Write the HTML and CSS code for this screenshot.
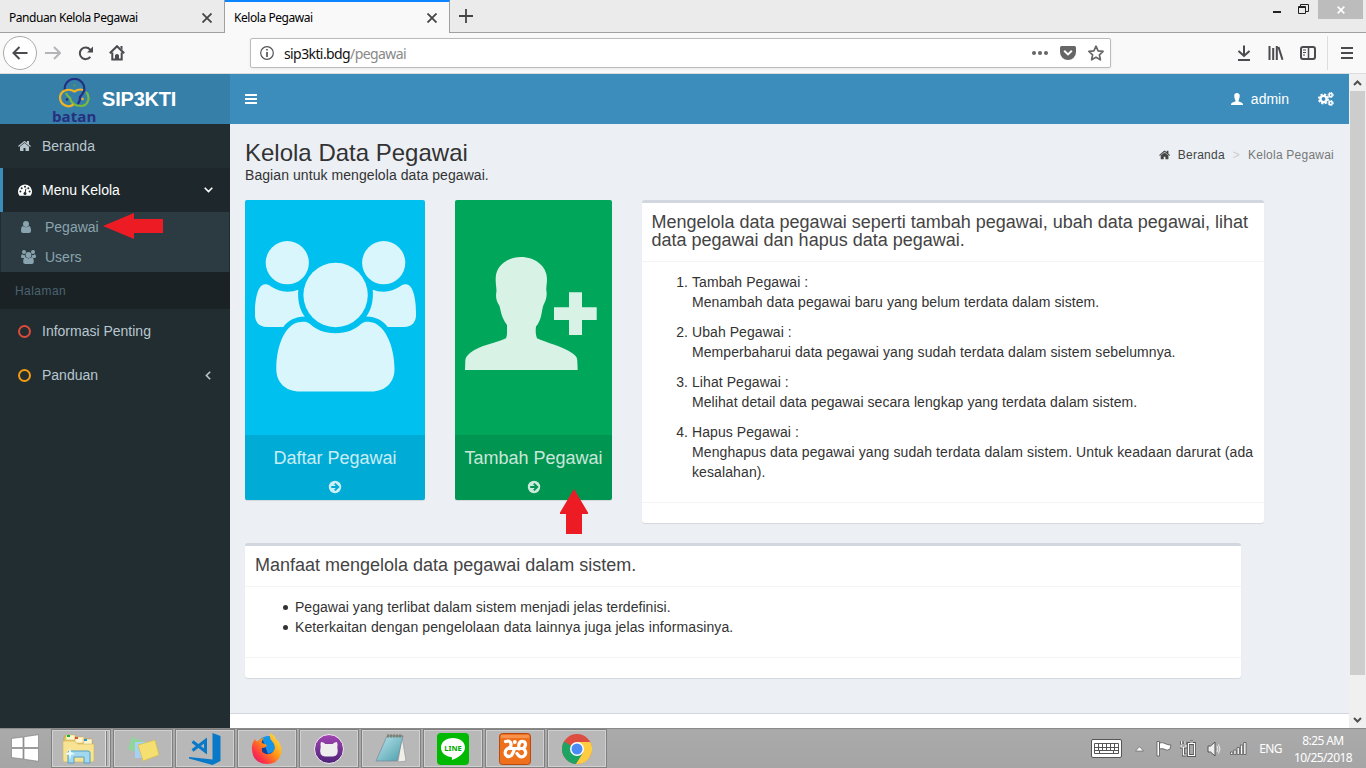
FILE: index.html
```html
<!DOCTYPE html>
<html lang="id">
<head>
<meta charset="utf-8">
<title>Kelola Pegawai</title>
<link rel="stylesheet" href="styles.css">
</head>
<body>
<svg class="defs" width="0" height="0">
  <symbol id="home" viewBox="0 0 1792 1792"><path d="M1408 992v480q0 26-19 45t-45 19h-384v-384h-256v384h-384q-26 0-45-19t-19-45v-480q0-1 .5-3t.5-3l575-474 575 474q1 2 1 6zm223-69l-62 74q-8 9-21 11h-3q-13 0-21-7l-692-577-692 577q-12 8-24 7-13-2-21-11l-62-74q-8-10-7-23.5t11-21.5l719-599q32-26 76-26t76 26l244 204v-195q0-14 9-23t23-9h192q14 0 23 9t9 23v408l219 182q10 8 11 21.5t-7 23.5z"/></symbol>
</svg>

<header class="tabs">
  <div class="tab"><span class="tab-title">Panduan Kelola Pegawai</span><svg width="10" height="10" viewBox="0 0 10 10"><path d="M.5.5l9 9M9.500.5l-9 9"/></svg></div>
  <div class="tab current"><span class="tab-title">Kelola Pegawai</span><svg width="10" height="10" viewBox="0 0 10 10"><path d="M.5.5l9 9M9.500.5l-9 9"/></svg></div>
  <div class="tab-space"><svg width="14" height="14" viewBox="0 0 14 14"><path d="M7 0v14M0 7h14"/></svg></div>
  <div class="win">
    <svg width="8" height="19" viewBox="0 0 8 19"><path d="M0 12h8" stroke="#222" stroke-width="2"/></svg>
    <svg width="11" height="19" viewBox="0 0 11 19"><path d="M.5 6.500h7v7h-7zM.5 7.500h7M2.500 6V4.500h8v7H8" fill="none" stroke="#222"/></svg>
    <span class="win-close"><svg width="8" height="8" viewBox="0 0 8 8"><path d="M.7.7l6.600 6.600M7.300.7L.7 7.300" stroke="#fff" stroke-width="1.700"/></svg></span>
  </div>
</header>

<nav class="toolbar">
  <span class="back"><svg width="16" height="14" viewBox="0 0 16 14"><path d="M15.500 7H1.500M7.500 1l-6 6 6 6"/></svg></span>
  <svg class="fwd" width="16" height="14" viewBox="0 0 16 14"><path d="M0 7h15M9 1l6 6-6 6"/></svg>
  <svg class="reload" width="16" height="16" viewBox="0 0 16 16"><path d="M12.300 11.800A5.800 5.800 0 1 1 12 4.500L13.500 6"/><path d="M15 1.500V7.500H9z" fill="#4a4a4f" stroke="none"/></svg>
  <svg class="house" width="16" height="16" viewBox="0 0 16 16"><path d="M.8 8.300 8 1.200l7.200 7.100M3.300 7.500V14.500h9.400V7.500"/><path d="M6 15v-4.500q0-1.500 2-1.500t2 1.500V15zM11.500 1h2v4l-2-2z" fill="#4a4a4f" stroke="none"/></svg>
  <div class="url">
    <svg width="14" height="14" viewBox="0 0 14 14"><circle cx="7" cy="7" r="6.300" fill="none" stroke="#555" stroke-width="1.200"/><path d="M7 6v5M7 3v1.600" stroke="#555" stroke-width="1.700"/></svg>
    <span class="address">sip3kti.bdg<i>/pegawai</i></span>
    <svg width="16" height="4" viewBox="0 0 16 4"><g fill="#666"><circle cx="2" cy="2" r="2"/><circle cx="8" cy="2" r="2"/><circle cx="14" cy="2" r="2"/></g></svg>
    <svg class="pocket" width="16" height="14" viewBox="0 0 16 14"><path fill="#666" d="M1.500 0h13Q16 0 16 1.500V6a8 8 0 0 1-16 0V1.500Q0 0 1.500 0z"/><path d="M4.200 4.700 8 8.400l3.800-3.700" fill="none" stroke="#fff" stroke-width="2"/></svg>
    <svg class="star" width="16" height="16" viewBox="0 0 16 16"><path d="M8 1.200l2.100 4.600 5 .6-3.700 3.400 1 5L8 12.300l-4.400 2.500 1-5L.9 6.400l5-.6z" fill="none" stroke="#666" stroke-width="1.700" stroke-linejoin="round"/></svg>
  </div>
  <div class="tools">
    <svg width="14" height="16" viewBox="0 0 14 16"><path d="M7 .5v10M1.500 6 7 11l5.500-5M1 15h12"/></svg>
    <svg width="16" height="14" viewBox="0 0 16 14"><path d="M1.500 0v14M5.200 2v12M8.800 0v14M10.500 1l4 12.700"/></svg>
    <svg width="16" height="14" viewBox="0 0 16 14"><rect x="1" y="1" width="14" height="12" rx="2"/><path d="M8.500 1v12" stroke-width="1.500"/><path d="M3 4h3M3 6.500h3M3 9h2" stroke-width="1"/></svg>
    <i class="sep"></i>
    <svg width="12" height="12" viewBox="0 0 12 12"><path d="M0 1h12M0 6h12M0 11h12"/></svg>
  </div>
</nav>

<div class="page">
  <aside class="sidebar">
    <div class="logo">
      <div class="batan">
        <svg width="32" height="30" viewBox="59 78 32 30"><g fill="none" stroke-width="2.200"><path d="M65 91A9.800 9.800 0 1 1 84 91Q82 95 80 97 80 102 77.500 104" stroke="#23307f"/><path d="M86 92C91 97 88 106 81 106 75 106 71 103 70 98Q67 96 66 93" stroke="#7ab83c"/><path d="M73.500 104.500C67 109 60 104 60 97 61 90 69 88 74.500 91.500Q79 88.500 83 90" stroke="#f0b323"/></g><circle cx="74.500" cy="85.500" r="1.300" fill="#4e9c50"/><circle cx="67" cy="99.500" r="1.300" fill="#23307f"/><circle cx="82.500" cy="99" r="1.300" fill="#f0b323"/></svg>
        <b>batan</b>
      </div>
      <strong>SIP3KTI</strong>
    </div>
    <a class="item"><svg class="ico" width="14" height="14"><use href="#home"/></svg>Beranda</a>
    <a class="item active"><svg class="ico" width="14" height="12" viewBox="0 0 14 12"><path fill="#fff" d="M1.300 11.500A7 7 0 1 1 12.700 11.500q-.2.300-.6.300H1.900q-.4 0-.6-.3z"/><g fill="#1e282c"><circle cx="2.400" cy="7.400" r="1"/><circle cx="3.700" cy="4.200" r="1"/><circle cx="7" cy="2.700" r="1"/><circle cx="10.300" cy="4.200" r="1"/><circle cx="11.600" cy="7.400" r="1"/><circle cx="7" cy="9.500" r="1.500"/></g><path d="M7 9l1-4.300" stroke="#1e282c"/></svg>Menu Kelola<svg class="chev" width="9" height="6" viewBox="0 0 9 6"><path d="M.7.8 4.500 4.600 8.300.8"/></svg></a>
    <div class="sub">
      <a><svg width="10" height="12" viewBox="0 0 10 12"><circle cx="5" cy="3" r="3"/><path d="M1.800 5Q5 7.700 8.200 5 10 5.500 10 10q0 2-2 2H2q-2 0-2-2 0-4.500 1.800-5z"/></svg><span>Pegawai</span></a>
      <a><svg class="wide" width="15" height="14" viewBox="0 0 15 14"><circle cx="3" cy="2" r="2"/><circle cx="12" cy="2" r="2"/><circle cx="7.500" cy="5" r="2.900"/><path d="M1.200 4.200Q3 5.500 4 5q-.1 1.500.7 2.500Q3.500 7.500 3 8H1.500Q0 8 0 6.800q0-2.300 1.200-2.600zM13.800 4.200Q12 5.500 11 5q.1 1.500-.7 2.500 1.200 0 1.700.5h1.500Q15 8 15 6.800q0-2.300-1.200-2.600zM4.500 7.300q3 2.300 6 0 2.300.2 2.300 4.500 0 2.200-2 2.200H4.200q-2 0-2-2.200 0-4.300 2.300-4.500z"/></svg><span>Users</span></a>
    </div>
    <div class="heading">Halaman</div>
    <a class="item"><i class="ring red"></i>Informasi Penting</a>
    <a class="item"><i class="ring yellow"></i>Panduan<svg class="chev left" width="6" height="9" viewBox="0 0 6 9"><path d="M5.200.7 1.400 4.500l3.800 3.800"/></svg></a>
  </aside>

  <main class="main">
    <div class="navbar">
      <svg width="12" height="10" viewBox="0 0 12 10"><path d="M0 1h12M0 5h12M0 9h12" stroke="#fff" stroke-width="2"/></svg>
      <span class="user"><svg width="12" height="12" viewBox="10 57 113 113"><use href="#person"/></svg>admin</span>
      <svg class="gears" width="16" height="14" viewBox="0 0 16 14"><g fill="none" stroke="#fff"><circle cx="5.500" cy="7" r="3.100" stroke-width="2.400"/><circle cx="5.500" cy="7" r="4.700" stroke-width="1.600" stroke-dasharray="2.200 1.490"/><circle cx="12.700" cy="3" r="1.600" stroke-width="1.500"/><circle cx="12.700" cy="3" r="2.600" stroke-width="1" stroke-dasharray="1.300 .742"/><circle cx="12.700" cy="11" r="1.600" stroke-width="1.500"/><circle cx="12.700" cy="11" r="2.600" stroke-width="1" stroke-dasharray="1.300 .742"/></g></svg>
    </div>
    <div class="content">
      <div class="title-row">
        <div><h1>Kelola Data Pegawai</h1><p>Bagian untuk mengelola data pegawai.</p></div>
        <div class="crumbs"><svg width="12" height="12"><use href="#home"/></svg><span>Beranda</span><em>&gt;</em><i>Kelola Pegawai</i></div>
      </div>
      <div class="cards">
        <a class="card aqua">
          <svg width="180" height="235" viewBox="0 0 180 235"><g id="mate"><circle cx="42.300" cy="62.700" r="21.600"/><path d="M10 112C10 99 13 84.300 20 84.300 23 84 24 85 26 86.500 31 89.500 36 91.700 42.300 91.700 47 91.700 50 91 53.300 89.700 52.500 99 54 109 59.800 116.500 50 117 43.500 120 38.300 127H22C14 127 10 122 10 115z"/></g><use href="#mate" transform="matrix(-1 0 0 1 181 0)"/><circle cx="90.600" cy="95" r="32.200"/><path d="M31.300 169C31.300 143 42 122 56 122 60 121.500 62 121.800 65 124 71 129.500 79 133.300 90.500 133.300 102 133.300 110 129.500 116 124 119 121.800 121 121.500 125 122 139 123 149.500 145 149.500 169 149.500 182 141 191.500 126 191.500H55C40 191.500 31.300 182 31.300 169z"/></svg>
          <span class="card-foot">Daftar Pegawai<svg width="14" height="14" viewBox="0 0 14 14"><circle cx="7" cy="7" r="6.200"/><path class="cut" d="M3.200 7H10M6.800 3.600 10.200 7l-3.400 3.400"/></svg></span>
        </a>
        <a class="card green">
          <svg width="157" height="235" viewBox="0 0 157 235"><path id="person" d="M66 57C80 57 92 66 92 79 92 84 91 88 91.300 90 92.500 97 90.500 101 88.500 105 86.500 110 87 120 81 126.500 80.500 131 80.500 134 82 138.200 92 143 107 146 117 153 121 156 122.200 157 122.300 161L122.700 170H10L10.300 161C10.500 157 12 156 15 153 25 145 41 143 51 138.200 52.500 135 52 131 52 125 46 117 46 111 44.500 106 41 101 40.500 97 41.500 91 41.500 88 40.500 84 40.700 78 41 66 52 57 66 57z"/><path d="M114 92.300h13v15h14.700V120H127v15h-13v-15H99v-12.700h15z"/></svg>
          <span class="card-foot">Tambah Pegawai<svg width="14" height="14" viewBox="0 0 14 14"><circle cx="7" cy="7" r="6.200"/><path class="cut" d="M3.200 7H10M6.800 3.600 10.200 7l-3.400 3.400"/></svg></span>
        </a>
        <section class="box guide">
          <h3>Mengelola data pegawai seperti tambah pegawai, ubah data pegawai, lihat data pegawai dan hapus data pegawai.</h3>
          <ol>
            <li>Tambah Pegawai :<br>Menambah data pegawai baru yang belum terdata dalam sistem.</li>
            <li>Ubah Pegawai :<br>Memperbaharui data pegawai yang sudah terdata dalam sistem sebelumnya.</li>
            <li>Lihat Pegawai :<br>Melihat detail data pegawai secara lengkap yang terdata dalam sistem.</li>
            <li>Hapus Pegawai :<br><span class="loose">Menghapus data pegawai yang sudah terdata dalam sistem. Untuk keadaan darurat (ada kesalahan).</span></li>
          </ol>
          <div class="box-foot"></div>
        </section>
      </div>
      <section class="box benefits">
        <h3>Manfaat mengelola data pegawai dalam sistem.</h3>
        <ul>
          <li>Pegawai yang terlibat dalam sistem menjadi jelas terdefinisi.</li>
          <li class="loose">Keterkaitan dengan pengelolaan data lainnya juga jelas informasinya.</li>
        </ul>
        <div class="box-foot"></div>
      </section>
    </div>
    <div class="page-foot"></div>
  </main>

  <div class="scroll">
    <svg width="15" height="17" viewBox="0 0 15 17"><path d="M4 11l3.500-3.500L11 11"/></svg>
    <i></i>
    <svg width="15" height="17" viewBox="0 0 15 17"><path d="M4 7l3.500 3.500L11 7"/></svg>
  </div>
  <svg class="pointer left-pointer" width="60" height="26" viewBox="0 0 60 26"><path d="M0 13 31 0v6h29v14H31v6z"/></svg>
  <svg class="pointer up-pointer" width="28" height="46" viewBox="0 0 28 46"><path d="M14 0l14 23.500v1.500h-6v20H6V25H0v-1.500z"/></svg>
</div>

<footer class="taskbar">
  <span class="start"><svg width="28" height="28" viewBox="0 0 28 28"><path fill="#fff" stroke="#777" stroke-width=".6" d="M.5 4.500 12 3v10.500H.5zM13 2.800 27.500.7v12.800H13zM.5 14.500H12V25L.5 23.500zM13 14.500h14.500v12.800L13 25.200z"/></svg></span>
  <span class="app grouped"><svg width="34" height="32" viewBox="0 0 34 32"><path d="M3 3h10l2 3h13q2 0 2 2v20H2V5q0-2 1-2z" fill="#eacb67" stroke="#b8963c" stroke-width=".7"/><path d="M4 2h9v5H4zM13 4h9v6h-9zM21 6h9v7h-9z" fill="#fff6cd" stroke="#c8ab55" stroke-width=".5"/><path d="M5 2h3v2H5z" fill="#18b527"/><path d="M13 4h3v2h-3z" fill="#d8572a"/><path d="M22 6h3v2h-3z" fill="#318fd8"/><path d="M1 8h11l4 3h16v16q0 2-2 2H3q-2 0-2-2z" fill="#f7e391" stroke="#ceb45f" stroke-width=".6"/><path d="M6 30V20q0-2 2-2h18q2 0 2 2v10h-6v-6H12v6z" fill="#a2d7ee" stroke="#529fc5"/><path d="M8 14l1 5 4 2-4 1-1 5-1-5-4-1 4-2z" fill="#e8fbff"/></svg></span>
  <span class="app"><svg width="32" height="26" viewBox="0 0 32 26"><path d="M5 1l13 5-5 12-12-5z" fill="#92d59b"/><path d="M8 6h14v16H8z" fill="#a8d0f5"/><path d="M11 9l17-5 4 15-16 6z" fill="#f5df70" stroke="#d3ba50" stroke-width=".7"/></svg></span>
  <span class="app"><svg width="34" height="34" viewBox="0 0 34 34"><path d="M24.500 1l8 3v25l-8 4L1 26.500V25l23.500 2.500z" fill="#0878c8"/><path d="M4.500 9.500 17.500 19.500V8.500L4.500 18.500" fill="none" stroke="#0878c8" stroke-width="3"/></svg></span>
  <span class="app"><svg width="32" height="32" viewBox="0 0 32 32"><defs><linearGradient id="fire" x1="1" y1="0" x2="0" y2="1"><stop offset="0" stop-color="#fff44f"/><stop offset=".45" stop-color="#ff9612"/><stop offset=".75" stop-color="#ff3347"/><stop offset="1" stop-color="#d21573"/></linearGradient></defs><circle cx="16" cy="15" r="11" fill="#163f9b"/><path d="M11 5q8-5 14 3l1 9-9 4z" fill="#1593e7"/><path d="M19 0q4 2 6 6 7 6 5 15-3 10-14 10T2 22Q-1 12 4 6q1 3 3 2 3-3 6-3-3 3-2 5l5 2q-1 3-5 3-1 5 4 6 7 1 9-6 0-4-3-7-3-3-2-8z" fill="url(#fire)"/></svg></span>
  <span class="app"><svg width="32" height="32" viewBox="0 0 32 32"><defs><linearGradient id="violet" x2="0" y2="1"><stop stop-color="#a445b5"/><stop offset="1" stop-color="#4c2377"/></linearGradient></defs><circle cx="16" cy="16" r="14.500" fill="url(#violet)" stroke="#eee"/><path d="M8 9q2.500 0 4.500 2h7q2-2 4.500-2 1 3 .3 5 2 9-4.300 9.500h-8Q5.500 23 7.700 14 7 11 8 9z" fill="#eee"/></svg></span>
  <span class="app"><svg width="32" height="32" viewBox="0 0 32 32"><defs><linearGradient id="note" x1="0" y1="0" x2="1" y2="1"><stop stop-color="#c0e7ed"/><stop offset="1" stop-color="#499ead"/></linearGradient></defs><path d="M27 3l4 25-8 1z" fill="#efefe8" stroke="#999" stroke-width=".7"/><path d="M12 3h16l-6 25H1z" fill="url(#note)" stroke="#789" stroke-width=".7"/><path d="M12 3h16M13 1v4M16 1v4M19 1v4M22 1v4M25 1v4" stroke="#776" stroke-width="1"/></svg></span>
  <span class="app"><svg width="32" height="32" viewBox="0 0 32 32"><rect width="32" height="32" rx="4" fill="#00b900"/><path d="M16 5C9 5 4 9 4 14.500c0 5 4 9 10.500 9.500.6.600.5 2 .4 3 5-1.500 13.100-6.500 13.100-12.500C28 9 23 5 16 5z" fill="#fff"/><text x="7.300" y="17.500" textLength="17.500" font-size="7.500" font-weight="700" fill="#00a800">LINE</text></svg></span>
  <span class="app"><svg width="32" height="32" viewBox="0 0 32 32"><rect x=".5" y=".5" width="31" height="31" rx="3" fill="#ee701d" stroke="#b84912"/><path d="M2 2h28v3H2z" fill="#f7934f"/><path d="M6.500 8.500Q11 7 12 10.500 12.500 15 8 16 5.500 18 6.500 21.500 9 25 12.500 22.500 14.500 19 15.500 16M11 15.500h13M20 16Q19 10 22 8.500 26 8 26.500 11 26.500 14 24 15.500 28 18 26 22 23 25.500 19.500 22.500L18 20.500" fill="none" stroke="#fff" stroke-width="3.200" stroke-linecap="round"/><circle cx="15.800" cy="9" r="2" fill="#fff"/></svg></span>
  <span class="app"><svg width="32" height="32" viewBox="0 0 32 32"><circle cx="16" cy="16" r="15" fill="#dd4e41"/><path d="M16 16 3 8.500A15 15 0 0 0 15 31l7.500-12z" fill="#1da362"/><path d="M16 9h13.300A15 15 0 0 1 15 31l7.500-12z" fill="#ffcd42"/><circle cx="16" cy="16" r="7" fill="#fff"/><circle cx="16" cy="16" r="5.500" fill="#4b8bf4"/></svg></span>
  <div class="tray">
    <svg width="31" height="19" viewBox="0 0 31 19"><rect x=".5" y=".5" width="30" height="18" rx="1.500" fill="#fff" stroke="#555"/><g stroke="#555" fill="none"><path d="M3.500 4.500h24v10h-24zM3.500 8.500h24M3.500 11.500h24M7.500 4v7M11.500 4v7M15.500 4v7M19.500 4v7M23.500 4v7M8.500 11v4M22.500 11v4"/></g></svg>
    <svg width="9" height="6" viewBox="0 0 9 6"><path d="M.5 5 4.500.7 8.500 5z" fill="#fff" stroke="#666" stroke-width=".7"/></svg>
    <svg width="16" height="16" viewBox="0 0 16 16"><path d="M1 .5h2.500V15H1zM3.500 2q3-1 5.500.5T15 4l-1 4q-3 2-5 .5T3.500 8z" fill="#fff" stroke="#555" stroke-width=".8"/></svg>
    <svg width="17" height="17" viewBox="0 0 17 17"><path d="M8.500 3.500h6v12h-6zM10 2h3M1.700 1v3M5 1v3M1 5h5v2H1zM3.400 7v8h3" fill="none" stroke="#555" stroke-width="2.800"/><path d="M8.500 3.500h6v12h-6zM10 2h3M1.700 1v3M5 1v3M1 5h5v2H1zM3.400 7v8h3" fill="none" stroke="#fff" stroke-width="1.200"/></svg>
    <svg width="14" height="16" viewBox="0 0 14 16"><path d="M1 5h2.500L8 1v14l-4.500-4H1z" fill="#eee" stroke="#555"/><path d="M10 5q2 3 0 6M11.500 3.500q3 4.500 0 9" fill="none" stroke="#eee"/></svg>
    <svg width="17" height="13" viewBox="0 0 17 13"><path d="M.5 10h2.300v2.500H.5zM3.800 8h2.300v4.500H3.800zM7.100 5.500h2.300v7H7.100zM10.400 3h2.300v9.500h-2.300zM13.700.5H16v12h-2.300z" fill="#fff" stroke="#555" stroke-width=".8"/></svg>
    <span class="lang">ENG</span>
    <span class="clock"><span>8:25 AM</span><span>10/25/2018</span></span>
  </div>
</footer>
</body>
</html>
```
FILE: styles.css
```css
* { box-sizing: border-box; }
body { margin: 0; width: 1366px; height: 768px; overflow: hidden; display: flex; flex-direction: column; font: 14px/20px "Liberation Sans", Arial, sans-serif; color: #333; background: #ecf0f5; }
svg { display: block; flex: none; }
.defs { position: absolute; }
i, em { font-style: normal; }
h1, h3, p, ul, ol { margin: 0; font-weight: 400; }

.tabs { height: 33px; flex: none; display: flex; background: #ebebeb; font: 12px/16px "Noto Sans", "Open Sans", sans-serif; color: #000; }
.tab { width: 225px; padding: 3px 12px 0 9px; display: flex; align-items: center; justify-content: space-between; border-bottom: 1px solid #a0a0a0; border-right: 1px solid #a0a0a0; }
.tab-title { letter-spacing: -.44px; }
.tab svg, .tab-space svg { fill: none; stroke: #444; stroke-width: 1.8; }
.tab.current { background: #f9f9fa; border-top: 2px solid #0a84ff; border-bottom: 0; padding-top: 0; }
.tab-space { flex: 1; border-bottom: 1px solid #a0a0a0; padding: 9px 0 0 9px; }
.win { display: flex; gap: 17px; padding-right: 3px; border-bottom: 1px solid #a0a0a0; }
.win-close { width: 45px; height: 19px; margin-left: -8px; background: #bcbcbc; display: grid; place-items: center; }

.toolbar { height: 41px; flex: none; display: flex; align-items: center; background: #f9f9fa; border-bottom: 1px solid #ddd; padding-left: 3px; }
.toolbar > svg, .back svg, .tools svg { fill: none; stroke: #4a4a4f; stroke-width: 2; }
.back { width: 34px; height: 34px; border: 1px solid #aaa; border-radius: 50%; background: #fff; display: grid; place-items: center; }
.toolbar > .fwd { margin-left: 8px; stroke: #b5b5b7; }
.toolbar > .reload { margin-left: 17px; }
.toolbar > .house { margin-left: 15px; }
.url { width: 861px; height: 30px; margin-left: 125px; padding: 0 6px 0 9px; display: flex; align-items: center; border: 1px solid #bbb; border-radius: 2px; background: #fff; box-shadow: 0 1px 3px #0001; }
.address { flex: 1; padding: 2px 0 0 10px; font: 14px/20px "Noto Sans", "Open Sans", sans-serif; letter-spacing: -.6px; color: #111; }
.address i { color: #888; }
.pocket { margin-left: 12px; }
.star { margin-left: 12px; }
.tools { flex: 1; display: flex; align-items: center; gap: 16px; padding-left: 126px; }
.tools svg + svg { margin-left: .5px; }
.sep { width: 1px; height: 34px; background: #ddd; margin: 0 -3px 0 -5px; }

.page { position: relative; height: 654px; flex: none; display: flex; }
.sidebar { width: 230px; background: #222d32; color: #b8c7ce; }
.logo { height: 50px; background: #367fa9; display: flex; color: #fff; padding-left: 52px; }
.batan { width: 50px; padding: 4px 0 0; }
.batan svg { margin-left: 7px; }
.batan b { display: block; margin-top: -2px; font: 700 15px/20px "Open Sans", sans-serif; color: #26307f; letter-spacing: .1px; }
.logo strong { font-size: 20px; line-height: 50px; letter-spacing: -.2px; }
.item { height: 44px; display: flex; align-items: center; padding-left: 18px; }
.ico { margin-right: 10px; fill: #b8c7ce; }
.item.active { background: #1e282c; border-left: 3px solid #3c8dbc; padding-left: 15px; color: #fff; }
.chev { margin: 0 17px 0 auto; fill: none; stroke: currentColor; stroke-width: 1.6; }
.chev.left { margin-right: 19px; }
.sub { margin: 0 1px; background: #2c3b41; color: #8aa4af; height: 60px; }
.sub a { display: flex; height: 30px; align-items: center; padding-left: 20px; }
.sub svg { fill: #8aa4af; }
.sub span { margin-left: 14px; }
.sub svg.wide + span { margin-left: 9px; }
.heading { height: 37px; background: #1a2226; color: #4b646f; font-size: 12px; line-height: 38px; padding-left: 15px; letter-spacing: .45px; }
.ring { width: 13px; height: 13px; border: 2px solid; border-radius: 50%; margin-right: 11px; }
.red { border-color: #dd4b39; }
.yellow { border-color: #f39c12; }

.main { width: 1119px; display: flex; flex-direction: column; }
.navbar { height: 50px; flex: none; background: #3c8dbc; color: #fff; display: flex; align-items: center; padding: 0 15px; }
.user { margin-left: auto; display: flex; align-items: center; gap: 8px; }
.user svg { fill: #fff; }
.gears { margin-left: 29px; }
.content { height: 589px; padding: 15px 15px 0; background: #ecf0f5; }
.title-row { display: flex; justify-content: space-between; height: 61px; }
h1 { font-size: 24px; line-height: 28px; margin-bottom: -2px; }
.title-row p { letter-spacing: .07px; }
.crumbs { display: flex; align-items: center; height: 32px; font-size: 12px; color: #444; letter-spacing: .23px; }
.crumbs svg { margin-right: 7px; fill: #444; }
.crumbs em { margin: 0 8px; color: #ccc; }
.crumbs i { color: #777; }
.cards { display: flex; align-items: flex-start; gap: 30px; }
.card { height: 300px; border-radius: 2px; overflow: hidden; box-shadow: 0 1px 1px #0000001a; }
.card > svg { fill: #fff; fill-opacity: .85; }
.aqua { width: 180px; background: #00c0ef; }
.green { width: 157px; background: #00a65a; }
.card-foot { display: flex; flex-direction: column; align-items: center; height: 65px; padding-top: 13px; gap: 12px; font-size: 18px; background: #0000001a; color: #ffffffcc; }
.card-foot svg { fill: #ffffffcc; }
.cut { fill: none; stroke: #00acd7; stroke-width: 2; }
.green .cut { stroke: #009551; }
.box { background: #fff; border-top: 3px solid #d2d6de; border-radius: 3px; box-shadow: 0 1px 1px #0000001a; }
.guide { width: 622px; }
.benefits { width: 996px; margin-top: 20px; }
.box h3 { font-size: 18px; line-height: 18px; color: #444; padding: 10px 10px 12px; border-bottom: 1px solid #f4f4f4; }
.guide h3 { padding-left: 9.5px; }
.box ol, .box ul { padding: 10px 10px 20px 50px; letter-spacing: .035px; }
.box ol { letter-spacing: .07px; }
.box .loose { letter-spacing: .105px; }
.box ol li + li { margin-top: 10px; }
.box ul { list-style: none; }
.box ul li::before { content: ""; display: inline-block; width: 5px; height: 5px; margin: 0 7px 2px -12px; border-radius: 50%; background: #333; }
.box-foot { height: 21px; border-top: 1px solid #f4f4f4; }
.page-foot { flex: 1; background: #fff; border-top: 1px solid #d2d6de; }
.scroll { width: 17px; padding: 0 1px; background: #f0f0f0; }
.scroll i { display: block; height: 584px; background: #cdcdcd; }
.scroll svg { fill: none; stroke: #505050; stroke-width: 2; }
.scroll svg:last-child { margin-top: 36px; }
.pointer { position: absolute; fill: #ed1c24; }
.left-pointer { left: 103px; top: 139px; }
.up-pointer { left: 560px; top: 415px; }

.taskbar { height: 40px; flex: none; display: flex; gap: 2px; background: linear-gradient(#aaa, #a5a5a5); border-top: 1px solid #8a8a8a; font-family: "Noto Sans", "Open Sans", sans-serif; }
.start { width: 49px; padding: 5px 0 0 11px; }
.app { width: 60px; height: 39px; border: 1px solid #808080; box-shadow: inset 0 0 0 1px #d0d0d0; background: #b8b8b8; display: grid; place-items: center; }
.app.grouped { padding-right: 5px; background: linear-gradient(90deg, transparent 53px, #ddd 53px 54px, #808080 54px 55px, transparent 55px), #b8b8b8; }
.tray { margin-left: auto; padding-right: 14px; display: flex; align-items: center; color: #fff; font-size: 12px; }
.tray > svg + svg { margin-left: 10px; }
.tray > svg:nth-child(2) { margin-left: 13px; }
.tray > svg:nth-child(3) { margin-left: 12px; }
.tray > svg:nth-child(4) { margin-left: 8px; }
.tray > svg:nth-child(6) { margin-left: 9px; }
.lang { margin-left: 12px; letter-spacing: -.6px; }
.clock { width: 58px; margin-left: 12px; display: flex; flex-direction: column; align-items: center; line-height: 17px; letter-spacing: -.6px; white-space: nowrap; }
```
